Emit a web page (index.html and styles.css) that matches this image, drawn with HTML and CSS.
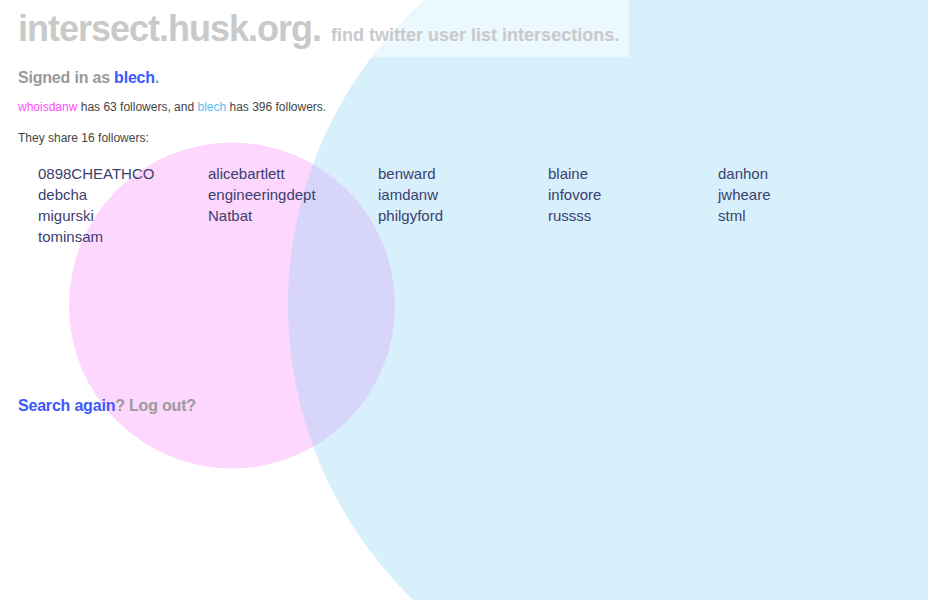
FILE: index.html
```html
<!DOCTYPE html>
<html lang="en">
<head>
    <meta charset="UTF-8">
    <meta name="viewport" content="width=device-width, initial-scale=1.0">
    <title>intersect.husk.org</title>
    <link rel="stylesheet" href="styles.css">
</head>
<body>
    <!-- Venn diagram drawn behind the page -->
    <div class="venn" aria-hidden="true">
        <svg width="928" height="600" viewBox="0 0 928 600">
            <defs>
                <clipPath id="blueClip">
                    <circle cx="698" cy="305" r="410"/>
                </clipPath>
            </defs>
            <circle cx="698" cy="305" r="410" fill="#d7f0fc"/>
            <circle cx="232" cy="305.5" r="163" fill="#fdd7fd"/>
            <circle cx="232" cy="305.5" r="163" fill="#d8d5fb" clip-path="url(#blueClip)"/>
        </svg>
    </div>

    <header class="masthead">
        <h1>intersect.husk.org. <span>find twitter user list intersections.</span></h1>
    </header>

    <main class="content">
        <p class="signed">Signed in as <a href="#">blech</a>.</p>
        <p class="counts"><a class="them" href="#">whoisdanw</a> has 63 followers, and <a class="me" href="#">blech</a> has 396 followers.</p>
        <p class="share">They share 16 followers:</p>

        <ul class="followers">
            <li>0898CHEATHCO</li>
            <li>alicebartlett</li>
            <li>benward</li>
            <li>blaine</li>
            <li>danhon</li>
            <li>debcha</li>
            <li>engineeringdept</li>
            <li>iamdanw</li>
            <li>infovore</li>
            <li>jwheare</li>
            <li>migurski</li>
            <li>Natbat</li>
            <li>philgyford</li>
            <li>russss</li>
            <li>stml</li>
            <li>tominsam</li>
        </ul>

        <p class="actions"><a href="#">Search again</a>? <a class="logout" href="#">Log out?</a></p>
    </main>
</body>
</html>
```

FILE: styles.css
```css
html, body {
    height: 100%;
}
body {
    font-family: "Liberation Sans", Arial, sans-serif;
    margin: 0;
    padding: 0;
    background: #fff;
    color: #444;
    overflow: hidden;
    position: relative;
}
a {
    text-decoration: none;
}
.venn {
    position: absolute;
    top: 0;
    left: 0;
    width: 928px;
    height: 600px;
    overflow: hidden;
    z-index: 0;
}
.venn svg {
    display: block;
}
.masthead {
    position: relative;
    z-index: 1;
    width: 611px;
    height: 57px;
    padding-left: 18px;
    background: rgba(255, 255, 255, 0.5);
}
.masthead h1 {
    margin: 0;
    font-size: 36px;
    line-height: 57px;
    letter-spacing: -1px;
    color: #c9c9c9;
    white-space: nowrap;
}
.masthead h1 span {
    font-size: 18px;
    letter-spacing: 0;
    margin-left: 1px;
}
.content {
    position: relative;
    z-index: 1;
    padding: 0 18px;
}
.signed {
    margin: 11px 0 0;
    font-size: 16px;
    line-height: 20px;
    font-weight: bold;
    color: #9a9a9a;
    letter-spacing: -0.2px;
}
.signed a {
    color: #3a5aff;
}
.counts {
    margin: 11px 0 0;
    font-size: 12px;
    line-height: 16px;
}
.counts .them {
    color: #ff4cff;
}
.counts .me {
    color: #5cbcf0;
}
.share {
    margin: 15px 0 0;
    font-size: 12px;
    line-height: 16px;
}
.followers {
    list-style: none;
    margin: 17px 0 0;
    padding: 0 0 0 20px;
    display: grid;
    grid-template-columns: repeat(5, 170px);
    font-size: 15px;
    line-height: 21px;
    color: #3b406e;
}
.actions {
    margin: 149px 0 0;
    font-size: 16px;
    line-height: 20px;
    font-weight: bold;
    color: #9a9a9a;
    letter-spacing: -0.2px;
}
.actions a {
    color: #3a5aff;
}
.actions .logout {
    color: #9a9a9a;
}
```
